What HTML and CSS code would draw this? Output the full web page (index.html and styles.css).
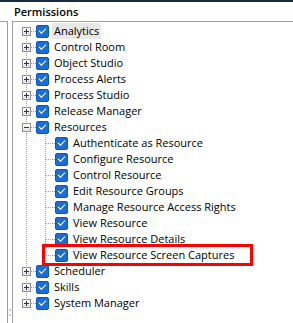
FILE: index.html
```html
<!DOCTYPE html>
<html lang="en">
<head>
  <meta charset="UTF-8" />
  <title>Permissions</title>
  <link rel="stylesheet" href="styles.css">
</head>
<body>
  <div class="top-bar"></div>
  <div class="caption">Permissions</div>

  <div class="panes">
    <div class="side-pane"></div>
    <div class="splitter"><span class="grip"></span><span class="grip"></span></div>

    <div class="tree-pane">
      <ul class="tree">
        <li><div class="node"><span class="exp"><span class="box plus"></span></span><span class="chk"></span><span class="label selected">Analytics</span></div></li>
        <li><div class="node"><span class="exp"><span class="box plus"></span></span><span class="chk"></span><span class="label">Control Room</span></div></li>
        <li><div class="node"><span class="exp"><span class="box plus"></span></span><span class="chk"></span><span class="label">Object Studio</span></div></li>
        <li><div class="node"><span class="exp"><span class="box plus"></span></span><span class="chk"></span><span class="label">Process Alerts</span></div></li>
        <li><div class="node"><span class="exp"><span class="box plus"></span></span><span class="chk"></span><span class="label">Process Studio</span></div></li>
        <li><div class="node"><span class="exp"><span class="box plus"></span></span><span class="chk"></span><span class="label">Release Manager</span></div></li>
        <li>
          <div class="node"><span class="exp"><span class="box minus"></span></span><span class="chk"></span><span class="label">Resources</span></div>
          <ul>
            <li><div class="node"><span class="exp"></span><span class="chk"></span><span class="label">Authenticate as Resource</span></div></li>
            <li><div class="node"><span class="exp"></span><span class="chk"></span><span class="label">Configure Resource</span></div></li>
            <li><div class="node"><span class="exp"></span><span class="chk"></span><span class="label">Control Resource</span></div></li>
            <li><div class="node"><span class="exp"></span><span class="chk"></span><span class="label">Edit Resource Groups</span></div></li>
            <li><div class="node"><span class="exp"></span><span class="chk"></span><span class="label">Manage Resource Access Rights</span></div></li>
            <li><div class="node"><span class="exp"></span><span class="chk"></span><span class="label">View Resource</span></div></li>
            <li><div class="node"><span class="exp"></span><span class="chk"></span><span class="label">View Resource Details</span></div></li>
            <li><div class="node"><span class="exp"></span><span class="chk"></span><span class="label">View Resource Screen Captures</span><span class="callout"></span></div></li>
          </ul>
        </li>
        <li><div class="node"><span class="exp"><span class="box plus"></span></span><span class="chk"></span><span class="label">Scheduler</span></div></li>
        <li><div class="node"><span class="exp"><span class="box plus"></span></span><span class="chk"></span><span class="label">Skills</span></div></li>
        <li><div class="node"><span class="exp"><span class="box plus"></span></span><span class="chk"></span><span class="label">System Manager</span></div></li>
      </ul>
    </div>
  </div>
</body>
</html>
```

FILE: styles.css
```css
body {
  margin: 0;
  background: #fff;
  font-family: "Open Sans", "Noto Sans", sans-serif;
  font-size: 11px;
  color: #000;
  overflow: hidden;
}

.top-bar {
  height: 2px;
  background-color: #172b45;
}

.caption {
  height: 19px;
  padding-left: 14px;
  line-height: 19px;
  font-weight: 600;
  font-size: 11px;
}

.panes {
  display: flex;
  height: 302px;
}

.side-pane {
  width: 7px;
  border-top: 1px solid #a0a0a0;
  border-right: 1px solid #a0a0a0;
}

.splitter {
  width: 4px;
  display: flex;
  flex-direction: column;
  align-items: center;
  padding-top: 288px;
  gap: 3px;
}

.grip {
  width: 2px;
  height: 2px;
  background-color: #c8c8c8;
}

.tree-pane {
  flex: 1;
  border-top: 1px solid #a0a0a0;
  border-left: 1px solid #a0a0a0;
  padding: 1px 0 0 4px;
}

.tree,
.tree ul {
  margin: 0;
  padding: 0;
  list-style: none;
}

.tree ul {
  padding-left: 19px;
}

.tree li {
  position: relative;
}

/* dotted connector running down the expander column */
.tree li::before {
  content: "";
  position: absolute;
  left: 9px;
  top: 0;
  bottom: 0;
  width: 1px;
  background: repeating-linear-gradient(to bottom, #a0a0a0 0 1px, transparent 1px 2px);
}

.tree > li:first-child::before {
  top: 8px;
}

.tree li:last-child::before {
  bottom: auto;
  height: 8px;
}

.node {
  position: relative;
  display: flex;
  align-items: center;
  height: 16px;
}

.exp {
  position: relative;
  width: 19px;
  height: 16px;
  flex: none;
}

.exp::after {
  content: "";
  position: absolute;
  left: 10px;
  top: 8px;
  width: 9px;
  height: 1px;
  background: repeating-linear-gradient(to right, #a0a0a0 0 1px, transparent 1px 2px);
}

.box {
  position: absolute;
  left: 5px;
  top: 4px;
  width: 9px;
  height: 9px;
  box-sizing: border-box;
  border: 1px solid #919191;
  background: linear-gradient(#fff, #e2e2e2);
  z-index: 1;
}

.box::before {
  content: "";
  position: absolute;
  left: 1px;
  top: 3px;
  width: 5px;
  height: 1px;
  background-color: #1d3557;
}

.plus::after {
  content: "";
  position: absolute;
  left: 3px;
  top: 1px;
  width: 1px;
  height: 5px;
  background-color: #1d3557;
}

.chk {
  position: relative;
  width: 13px;
  height: 13px;
  box-sizing: border-box;
  flex: none;
  border: 1px solid #0e58b5;
  border-radius: 2px;
  background-color: #1b6dd1;
}

.chk::after {
  content: "";
  position: absolute;
  left: 2px;
  top: 2px;
  width: 6px;
  height: 3px;
  border-left: 1.3px solid #fff;
  border-bottom: 1.3px solid #fff;
  transform: rotate(-45deg);
}

.label {
  margin-left: 3px;
  padding: 0 2px;
  line-height: 16px;
  white-space: nowrap;
}

.selected {
  background-color: #e8e8e8;
}

.callout {
  position: absolute;
  left: 6px;
  top: -3px;
  width: 211px;
  height: 22px;
  box-sizing: border-box;
  border: 3px solid #ff0000;
}
```
